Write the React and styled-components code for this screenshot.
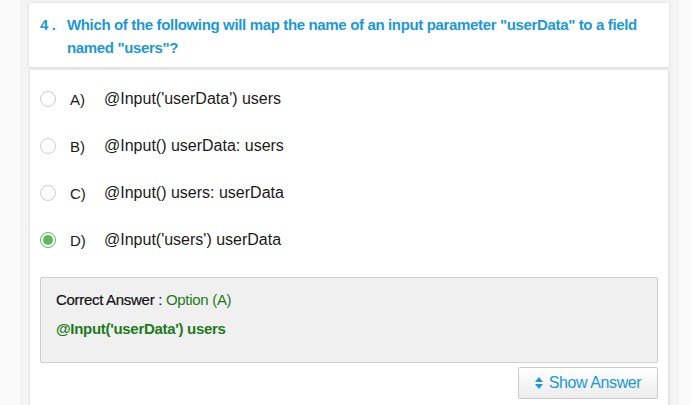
import styled, { createGlobalStyle } from "styled-components";

const GlobalStyle = createGlobalStyle`
  html, body {
    margin: 0;
    padding: 0;
    background: #fafafa;
  }
`;

const Page = styled.div`
  width: 659px;
  margin-left: 20px;
  padding: 3px 10px 0 9px;
  box-sizing: border-box;
  height: 405px;
  overflow: hidden;
  background: #f4f4f4;
`;

const Header = styled.div`
  background: #fff;
  box-shadow: 0 0 3px rgba(0, 0, 0, 0.12);
  border-bottom: 1px solid #e4e4e4;
  padding: 10px 20px 8px 11px;
  display: flex;
  gap: 9px;
  font-family: "Liberation Sans", Arial, sans-serif;
  font-weight: bold;
  font-size: 15px;
  letter-spacing: -0.35px;
  line-height: 23px;
  color: #1c98d6;
`;

const Num = styled.span`
  flex: none;
  width: 18px;
`;

const Body = styled.div`
  margin-top: 2px;
  margin-right: 1px;
  background: #fff;
  border-left: 1px solid #e6e6e6;
  box-shadow: 1px 0 3px rgba(0, 0, 0, 0.1);
  padding: 18px 10px 20px 10px;
  min-height: 340px;
`;

const Options = styled.div`
  display: flex;
  flex-direction: column;
  gap: 26px;
  font-family: "Liberation Sans", Arial, sans-serif;
  font-size: 16px;
  color: #1a1a1a;
`;

const Option = styled.div`
  display: flex;
  align-items: center;
  height: 21px;
`;

const Radio = styled.span`
  width: 16px;
  height: 16px;
  border-radius: 50%;
  box-sizing: border-box;
  border: 1px solid ${(p) => (p.checked ? "#5cb85c" : "#cfcfcf")};
  background: #fff;
  display: flex;
  align-items: center;
  justify-content: center;
  margin-right: 14px;

  &::after {
    content: "";
    width: 10px;
    height: 10px;
    border-radius: 50%;
    background: ${(p) => (p.checked ? "#5cb85c" : "transparent")};
  }
`;

const Letter = styled.span`
  width: 34px;
  padding-top: 2px;
  font-size: 15px;
`;

const AnswerBox = styled.div`
  margin-top: 27px;
  background: #f0f0f0;
  border: 1px solid #cfcfcf;
  border-radius: 2px;
  padding: 13px 15px 24px;
  font-family: "Liberation Sans", Arial, sans-serif;
  font-size: 15px;
  letter-spacing: -0.3px;
  line-height: 18px;
`;

const AnswerLine = styled.div`
  color: #111;
  margin-bottom: 11px;
`;

const Label = styled.span`
  -webkit-text-stroke: 0.2px #111;
`;

const Green = styled.span`
  color: #1d7a1d;
  font-weight: ${(p) => (p.bold ? "bold" : "normal")};
`;

const Actions = styled.div`
  display: flex;
  justify-content: flex-end;
  margin-top: 4px;
`;

const Button = styled.button`
  display: flex;
  align-items: center;
  gap: 6px;
  height: 32px;
  width: 140px;
  justify-content: center;
  border: 1px solid #cccccc;
  border-radius: 2px;
  background: linear-gradient(#ffffff, #ececec);
  color: #1c98d6;
  font-family: "Liberation Sans", Arial, sans-serif;
  font-size: 16px;
  letter-spacing: -0.4px;
  cursor: pointer;
`;

const SortIcon = () => (
  <svg width="8" height="12" viewBox="0 0 8 12">
    <path d="M4 0 L8 5 H0 Z M0 7 H8 L4 12 Z" fill="#1c98d6" />
  </svg>
);

const options = [
  { id: "A", text: "@Input('userData') users" },
  { id: "B", text: "@Input() userData: users" },
  { id: "C", text: "@Input() users: userData" },
  { id: "D", text: "@Input('users') userData", checked: true },
];

export default function App() {
  return (
    <>
      <GlobalStyle />
      <Page>
        <Header>
          <Num>4 .</Num>
          <div>
            Which of the following will map the name of an input parameter
            "userData" to a field named "users"?
          </div>
        </Header>
        <Body>
          <Options>
            {options.map((o) => (
              <Option key={o.id}>
                <Radio checked={o.checked} />
                <Letter>{o.id})</Letter>
                <span>{o.text}</span>
              </Option>
            ))}
          </Options>
          <AnswerBox>
            <AnswerLine>
              <Label>Correct Answer :</Label> <Green>Option (A)</Green>
            </AnswerLine>
            <Green bold>@Input('userData') users</Green>
          </AnswerBox>
          <Actions>
            <Button>
              <SortIcon />
              Show Answer
            </Button>
          </Actions>
        </Body>
      </Page>
    </>
  );
}
